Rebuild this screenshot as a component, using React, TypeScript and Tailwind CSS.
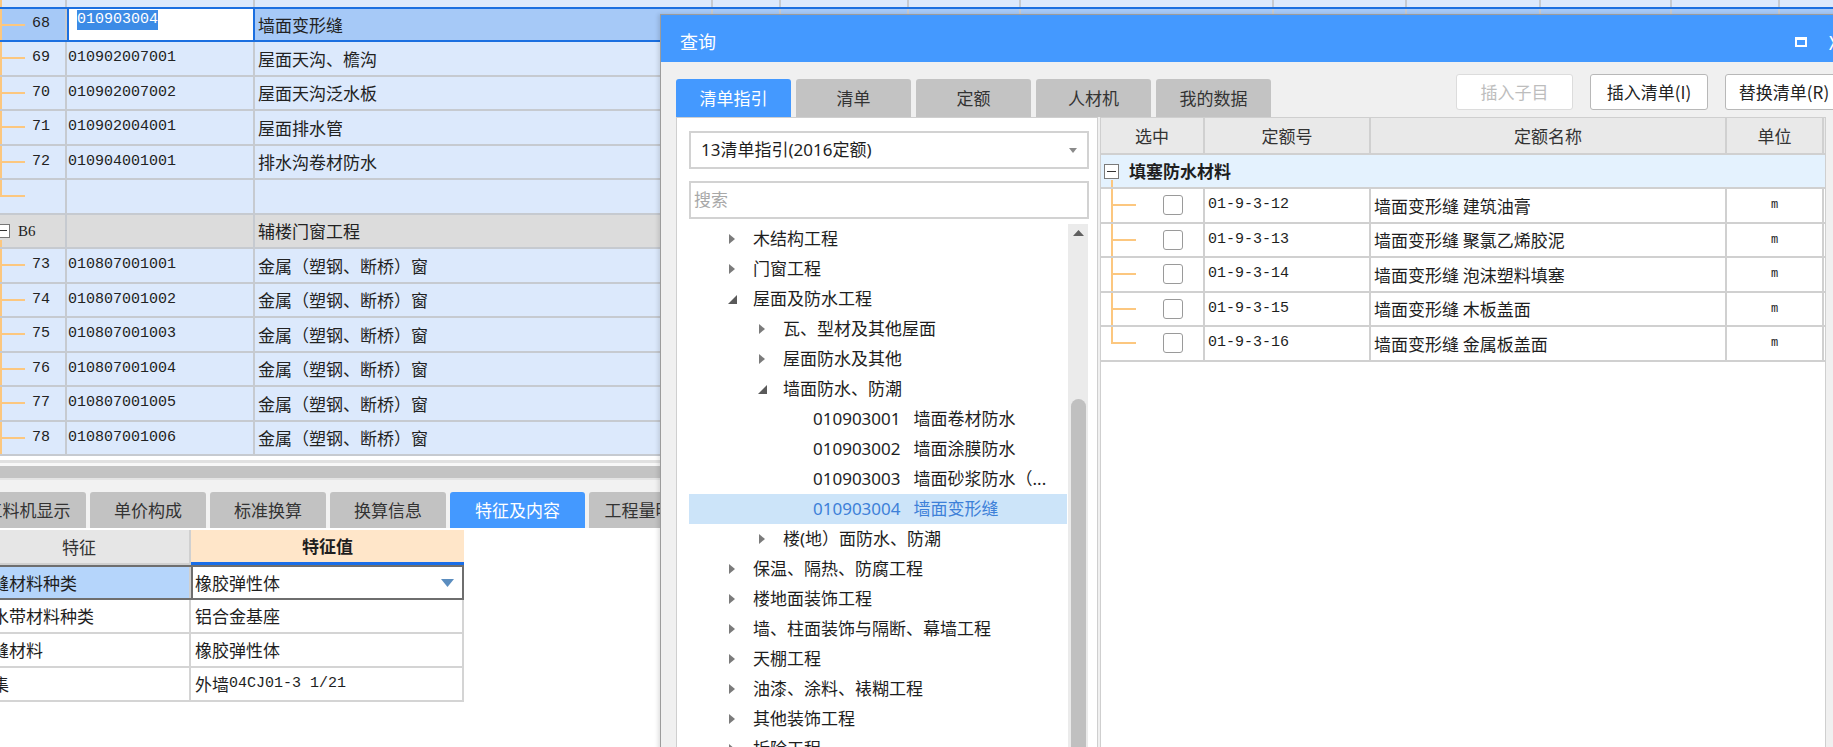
import React from "react";

const EXTRA = [
  "w-[68px]",
  "w-[128px]",
  "w-[112px]",
  "w-[253px]",
  "w-[133px]",
  "w-[134px]",
  "w-[131px]",
  "w-[108px]",
  "w-[200px]",
];

function ExtraCols() {
  return (
    <>
      {EXTRA.map((w, i) => (
        <div key={i} className={`${w} shrink-0 h-full border-r-2 border-[#c6cad0]`} />
      ))}
    </>
  );
}

type GRow = { num?: string; code?: string; name?: string; kind: "item" | "end" | "blank" };

const gridRows: GRow[] = [
  { num: "69", code: "010902007001", name: "屋面天沟、檐沟", kind: "item" },
  { num: "70", code: "010902007002", name: "屋面天沟泛水板", kind: "item" },
  { num: "71", code: "010902004001", name: "屋面排水管", kind: "item" },
  { num: "72", code: "010904001001", name: "排水沟卷材防水", kind: "item" },
  { kind: "end" },
];

const gridRows2: GRow[] = [1, 2, 3, 4, 5, 6].map((i) => ({
  num: String(72 + i),
  code: "01080700100" + i,
  name: "金属（塑钢、断桥）窗",
  kind: "item" as const,
}));

function TreeMarks({ end }: { end?: boolean }) {
  return (
    <>
      <span
        className={
          end
            ? "absolute left-0 top-0 h-1/2 w-[2px] bg-[#fcc77f]"
            : "absolute left-0 top-0 bottom-0 w-[2px] bg-[#fcc77f]"
        }
      />
      <span className="absolute left-0 top-1/2 -mt-px w-[25px] h-[2px] bg-[#fcc77f]" />
    </>
  );
}

function GridItemRow({ r }: { r: GRow }) {
  return (
    <div className="flex h-[34.5px] bg-[#dce9fc] border-b-2 border-[#c6cad0] shrink-0">
      <div className="relative w-[67px] shrink-0 h-full border-r-2 border-[#c6cad0] flex items-center justify-end pr-[15px] font-['Liberation_Mono',monospace] text-[15px] text-[#222]">
        <TreeMarks end={r.kind === "end"} />
        {r.num}
      </div>
      <div className="w-[188px] shrink-0 h-full border-r-2 border-[#c6cad0] flex items-center pl-[1px] font-['Liberation_Mono',monospace] text-[15px] text-[#222]">
        {r.code}
      </div>
      <div className="w-[458px] shrink-0 h-full border-r-2 border-[#c6cad0] flex items-center pl-[3px] text-[17px] text-[#222]">
        {r.name}
      </div>
      <ExtraCols />
    </div>
  );
}

type TItem = { lvl: 1 | 2 | 3; arrow?: "r" | "d"; code?: string; text: string; sel?: boolean };

const tree: TItem[] = [
  { lvl: 1, arrow: "r", text: "木结构工程" },
  { lvl: 1, arrow: "r", text: "门窗工程" },
  { lvl: 1, arrow: "d", text: "屋面及防水工程" },
  { lvl: 2, arrow: "r", text: "瓦、型材及其他屋面" },
  { lvl: 2, arrow: "r", text: "屋面防水及其他" },
  { lvl: 2, arrow: "d", text: "墙面防水、防潮" },
  { lvl: 3, code: "010903001", text: "墙面卷材防水" },
  { lvl: 3, code: "010903002", text: "墙面涂膜防水" },
  { lvl: 3, code: "010903003", text: "墙面砂浆防水（..." },
  { lvl: 3, code: "010903004", text: "墙面变形缝", sel: true },
  { lvl: 2, arrow: "r", text: "楼(地）面防水、防潮" },
  { lvl: 1, arrow: "r", text: "保温、隔热、防腐工程" },
  { lvl: 1, arrow: "r", text: "楼地面装饰工程" },
  { lvl: 1, arrow: "r", text: "墙、柱面装饰与隔断、幕墙工程" },
  { lvl: 1, arrow: "r", text: "天棚工程" },
  { lvl: 1, arrow: "r", text: "油漆、涂料、裱糊工程" },
  { lvl: 1, arrow: "r", text: "其他装饰工程" },
  { lvl: 1, arrow: "r", text: "拆除工程" },
];

function Arrow({ kind }: { kind: "r" | "d" }) {
  return kind === "r" ? (
    <svg width="6" height="10" viewBox="0 0 6 10" className="shrink-0">
      <path d="M0 0 L6 5 L0 10 Z" fill="#7b7b7b" />
    </svg>
  ) : (
    <svg width="9" height="9" viewBox="0 0 9 9" className="shrink-0 -ml-[1px]">
      <path d="M9 0 L9 9 L0 9 Z" fill="#5a5a5a" />
    </svg>
  );
}

function TreeRow({ t }: { t: TItem }) {
  const pad = t.lvl === 1 ? "pl-[40px]" : t.lvl === 2 ? "pl-[70px]" : "pl-[124px]";
  return (
    <div
      className={`h-[30px] shrink-0 flex items-center ${pad} ${
        t.sel ? "bg-[#cce4f9] text-[#3d80d8]" : "text-[#1e1e1e]"
      } text-[17px] whitespace-nowrap`}
    >
      {t.arrow && (
        <div className="w-[24px] shrink-0 flex items-center">
          <Arrow kind={t.arrow} />
        </div>
      )}
      {t.code && <span className="mr-[13px]">{t.code}</span>}
      <span>{t.text}</span>
    </div>
  );
}

const quotas = [
  { code: "01-9-3-12", name: "墙面变形缝 建筑油膏" },
  { code: "01-9-3-13", name: "墙面变形缝 聚氯乙烯胶泥" },
  { code: "01-9-3-14", name: "墙面变形缝 泡沫塑料填塞" },
  { code: "01-9-3-15", name: "墙面变形缝 木板盖面" },
  { code: "01-9-3-16", name: "墙面变形缝 金属板盖面" },
];

export default function App() {
  return (
    <div className="relative w-[1833px] h-[747px] overflow-hidden bg-white font-['Noto_Sans_CJK_SC',sans-serif]">
      {/* Background grid */}
      <div className="h-[460px] overflow-hidden flex flex-col bg-white">
        {/* partial top row */}
        <div className="flex h-[7px] bg-[#dce9fc] shrink-0">
          <div className="relative w-[67px] shrink-0 h-full border-r-2 border-[#c6cad0]">
            <span className="absolute left-0 top-0 bottom-0 w-[2px] bg-[#fcc77f]" />
          </div>
          <div className="w-[188px] shrink-0 h-full border-r-2 border-[#c6cad0]" />
          <div className="w-[458px] shrink-0 h-full border-r-2 border-[#c6cad0]" />
          <ExtraCols />
        </div>
        {/* selected row 68 */}
        <div className="flex h-[35px] bg-[#a6c9f7] border-y-2 border-[#1b6fe0] shrink-0">
          <div className="relative w-[67px] shrink-0 h-full border-r-2 border-[#c6cad0] flex items-center justify-end pr-[15px] font-['Liberation_Mono',monospace] text-[15px] text-[#222]">
            <TreeMarks />
            68
          </div>
          <div className="w-[188px] shrink-0 h-full bg-white border-x-2 border-[#1b6fe0] flex items-start pt-[1px] pl-[8px]">
            <span className="bg-[#3c8be6] text-white font-['Liberation_Mono',monospace] text-[15px] leading-[20px]">
              010903004
            </span>
          </div>
          <div className="w-[458px] shrink-0 h-full border-r-2 border-[#c6cad0] flex items-center pl-[3px] text-[17px] text-[#222]">
            墙面变形缝
          </div>
          <ExtraCols />
        </div>
        {gridRows.map((r, i) => (
          <GridItemRow key={"a" + i} r={r} />
        ))}
        {/* group B6 */}
        <div className="flex h-[34.5px] bg-[#dcdcdc] border-b-2 border-[#c6cad0] shrink-0">
          <div className="relative w-[67px] shrink-0 h-full border-r-2 border-[#c6cad0] flex items-center pl-[18px] font-['Liberation_Serif',serif] text-[15px] text-[#222]">
            <span className="absolute left-[-4px] top-1/2 -mt-[7px] w-[14px] h-[14px] border border-[#777] bg-white flex items-center justify-center">
              <span className="w-[8px] h-px bg-[#333]" />
            </span>
            <span className="absolute left-0 top-[25px] bottom-0 w-[2px] bg-[#fcc77f]" />
            B6
          </div>
          <div className="w-[188px] shrink-0 h-full border-r-2 border-[#c6cad0]" />
          <div className="w-[458px] shrink-0 h-full border-r-2 border-[#c6cad0] flex items-center pl-[3px] text-[17px] text-[#222]">
            辅楼门窗工程
          </div>
          <ExtraCols />
        </div>
        {gridRows2.map((r, i) => (
          <GridItemRow key={"b" + i} r={r} />
        ))}
      </div>

      {/* horizontal scrollbar band */}
      <div className="h-[32px] bg-[#f2f2f2] flex flex-col">
        <div className="h-[3px] bg-[#e0e0e0]" />
        <div className="h-[3px] bg-[#f7f7f7]" />
        <div className="h-[12px] bg-[#c3c3c3]" />
        <div className="h-[2px] bg-[#e4e4e4]" />
      </div>

      {/* bottom tabs */}
      <div className="h-[36px] flex gap-[4px] ml-[-30px] bg-[#f2f2f2] text-[17px]">
        <div className="w-[116px] rounded-t-[3px] bg-[#c2c2c2] text-[#333] flex items-center justify-center">工料机显示</div>
        <div className="w-[116px] rounded-t-[3px] bg-[#c2c2c2] text-[#333] flex items-center justify-center">单价构成</div>
        <div className="w-[116px] rounded-t-[3px] bg-[#c2c2c2] text-[#333] flex items-center justify-center">标准换算</div>
        <div className="w-[116px] rounded-t-[3px] bg-[#c2c2c2] text-[#333] flex items-center justify-center">换算信息</div>
        <div className="w-[135px] rounded-t-[3px] bg-[#4499ff] text-white flex items-center justify-center">特征及内容</div>
        <div className="w-[116px] rounded-t-[3px] bg-[#c2c2c2] text-[#333] flex items-center justify-center">工程量明细</div>
      </div>

      {/* feature table */}
      <div className="mt-[2px] ml-[-31px] w-[495px] flex flex-col text-[17px] text-[#1e1e1e]">
        <div className="flex h-[35px]">
          <div className="w-[222px] bg-[#e6e6e6] border-r-2 border-b-2 border-[#d0d0d0] flex items-center justify-center text-[#333]">
            特征
          </div>
          <div className="w-[273px] bg-[#ffe6c9] border-b-[3px] border-[#1a6ee8] flex items-center justify-center font-bold">
            特征值
          </div>
        </div>
        <div className="flex h-[35px] border-y-2 border-[#6e6e6e]">
          <div className="w-[222px] bg-[#b5d5fb] border-r-2 border-[#d0d0d0] flex items-center pl-[6px] whitespace-nowrap">
            嵌缝材料种类
          </div>
          <div className="w-[273px] bg-white border-x-2 border-[#6e6e6e] flex items-center pl-[2px] pr-[8px]">
            <span className="flex-1">橡胶弹性体</span>
            <svg width="13" height="8" viewBox="0 0 13 8">
              <path d="M0 0 L13 0 L6.5 8 Z" fill="#5b8dbf" />
            </svg>
          </div>
        </div>
        <div className="flex h-[34px] border-b-2 border-[#d4d4d4]">
          <div className="w-[222px] border-r-2 border-[#d4d4d4] flex items-center pl-[6px] whitespace-nowrap">止水带材料种类</div>
          <div className="w-[273px] border-r-2 border-[#d4d4d4] flex items-center pl-[4px]">铝合金基座</div>
        </div>
        <div className="flex h-[34px] border-b-2 border-[#d4d4d4]">
          <div className="w-[222px] border-r-2 border-[#d4d4d4] flex items-center pl-[6px] whitespace-nowrap">嵌缝材料</div>
          <div className="w-[273px] border-r-2 border-[#d4d4d4] flex items-center pl-[4px]">橡胶弹性体</div>
        </div>
        <div className="flex h-[34px] border-b-2 border-[#d4d4d4]">
          <div className="w-[222px] border-r-2 border-[#d4d4d4] flex items-center pl-[6px] whitespace-nowrap">图集</div>
          <div className="w-[273px] border-r-2 border-[#d4d4d4] flex items-center pl-[4px]">
            外墙<span className="font-['Liberation_Mono',monospace] text-[15px]">04CJ01-3 1/21</span>
          </div>
        </div>
      </div>

      {/* Query dialog */}
      <div className="absolute left-[660px] top-[14px] w-[1200px] h-[760px] border border-[#9c9c9c] bg-[#f0f0f0] shadow-[-2px_0_4px_rgba(0,0,0,0.12)] flex flex-col">
        <div className="h-[47px] bg-[#4499ff] flex items-center pt-[6px] pl-[19px] text-white text-[18px] shrink-0">
          <span>查询</span>
          <div className="ml-auto mr-[20px] flex items-center gap-[22px]">
            <span className="w-[12px] h-[10px] border-2 border-t-[3px] border-white" />
            <span className="text-[18px] leading-none">X</span>
          </div>
        </div>
        {/* tabs + buttons */}
        <div className="h-[55px] flex shrink-0 pl-[15px]">
          <div className="flex gap-[5px] self-end text-[17px]">
            <div className="w-[115px] h-[38px] rounded-t-[3px] bg-[#4499ff] text-white flex items-center justify-center">清单指引</div>
            <div className="w-[115px] h-[38px] rounded-t-[3px] bg-[#c3c3c3] text-[#333] flex items-center justify-center">清单</div>
            <div className="w-[115px] h-[38px] rounded-t-[3px] bg-[#c3c3c3] text-[#333] flex items-center justify-center">定额</div>
            <div className="w-[115px] h-[38px] rounded-t-[3px] bg-[#c3c3c3] text-[#333] flex items-center justify-center">人材机</div>
            <div className="w-[115px] h-[38px] rounded-t-[3px] bg-[#c3c3c3] text-[#333] flex items-center justify-center">我的数据</div>
          </div>
          <div className="ml-[185px] mt-[12px] self-start flex gap-[17px] text-[17px]">
            <div className="w-[117px] h-[36px] rounded-[3px] border border-[#dcdcdc] bg-white text-[#bdbdbd] flex items-center justify-center">插入子目</div>
            <div className="w-[118px] h-[36px] rounded-[3px] border border-[#b8b8b8] bg-white text-[#222] flex items-center justify-center">插入清单(I)</div>
            <div className="w-[118px] h-[36px] rounded-[3px] border border-[#b8b8b8] bg-white text-[#222] flex items-center justify-center">替换清单(R)</div>
          </div>
        </div>
        {/* panels */}
        <div className="flex flex-1 pl-[15px] gap-[2px]">
          {/* left panel */}
          <div className="w-[422px] h-[700px] bg-white border border-[#cfcfcf] pl-[12px] pr-[9px] pt-[13px] flex flex-col font-['Noto_Sans','Noto_Sans_CJK_SC',sans-serif]">
            <div className="w-[400px] h-[38px] border-2 border-[#d2d2d2] flex items-center pl-[10px] pr-[10px] text-[17px] text-[#1e1e1e] shrink-0">
              <span className="flex-1">13清单指引(2016定额)</span>
              <svg width="8" height="5" viewBox="0 0 8 5">
                <path d="M0 0 L8 0 L4 5 Z" fill="#8a8a8a" />
              </svg>
            </div>
            <div className="mt-[12px] w-[400px] h-[38px] border-2 border-[#d2d2d2] flex items-center pl-[3px] text-[17px] text-[#a8a8a8] shrink-0">
              搜索
            </div>
            <div className="mt-[5px] flex flex-1 min-h-0">
              <div className="w-[378px] flex flex-col overflow-hidden">
                {tree.map((t, i) => (
                  <TreeRow key={i} t={t} />
                ))}
              </div>
              <div className="ml-[1px] w-[20px] bg-[#ebebeb] flex flex-col items-center">
                <svg width="11" height="6" viewBox="0 0 11 6" className="mt-[6px]">
                  <path d="M0 6 L5.5 0 L11 6 Z" fill="#606060" />
                </svg>
                <div className="mt-[163px] w-[15px] flex-1 rounded-t-full bg-[#c0c0c0]" />
              </div>
            </div>
          </div>
          {/* right panel */}
          <div className="w-[726px] h-[700px] bg-white border border-[#cfcfcf] flex flex-col text-[17px] text-[#1e1e1e]">
            <div className="flex h-[37px] bg-[#e9e9e9] border-b-2 border-[#d0d0d0] shrink-0 text-[#333]">
              <div className="w-[104px] border-r-2 border-[#d0d0d0] flex items-center justify-center">选中</div>
              <div className="w-[166px] border-r-2 border-[#d0d0d0] flex items-center justify-center">定额号</div>
              <div className="w-[356px] border-r-2 border-[#d0d0d0] flex items-center justify-center">定额名称</div>
              <div className="w-[97px] border-r-2 border-[#d0d0d0] flex items-center justify-center">单位</div>
            </div>
            <div className="relative flex h-[34px] bg-[#e4f2fe] border-b-2 border-[#d0d0d0] items-center shrink-0">
              <span className="ml-[3px] w-[15px] h-[15px] border border-[#7a7a7a] bg-white flex items-center justify-center">
                <span className="w-[9px] h-px bg-[#333]" />
              </span>
              <span className="absolute left-[10px] top-[25px] bottom-0 w-[2px] bg-[#fcc77f]" />
              <span className="ml-[10px] font-bold">填塞防水材料</span>
            </div>
            {quotas.map((q, i) => (
              <div key={i} className="flex h-[34.5px] border-b-2 border-[#d0d0d0] shrink-0">
                <div className="relative w-[104px] border-r-2 border-[#d0d0d0] flex items-center">
                  <span
                    className={
                      i === quotas.length - 1
                        ? "absolute left-[10px] top-0 h-1/2 w-[2px] bg-[#fcc77f]"
                        : "absolute left-[10px] top-0 bottom-0 w-[2px] bg-[#fcc77f]"
                    }
                  />
                  <span className="absolute left-[10px] top-1/2 -mt-px w-[25px] h-[2px] bg-[#fcc77f]" />
                  <span className="ml-[62px] w-[20px] h-[20px] rounded-[3px] border-[1.5px] border-[#9a9a9a] bg-white" />
                </div>
                <div className="w-[166px] border-r-2 border-[#d0d0d0] flex items-center pl-[3px] font-['Liberation_Mono',monospace] text-[15px]">
                  {q.code}
                </div>
                <div className="w-[356px] border-r-2 border-[#d0d0d0] flex items-center pl-[3px] whitespace-pre">
                  {q.name}
                </div>
                <div className="w-[97px] border-r-2 border-[#d0d0d0] flex items-center justify-center font-['Liberation_Mono',monospace] text-[12px]">
                  m
                </div>
              </div>
            ))}
          </div>
        </div>
      </div>
    </div>
  );
}
